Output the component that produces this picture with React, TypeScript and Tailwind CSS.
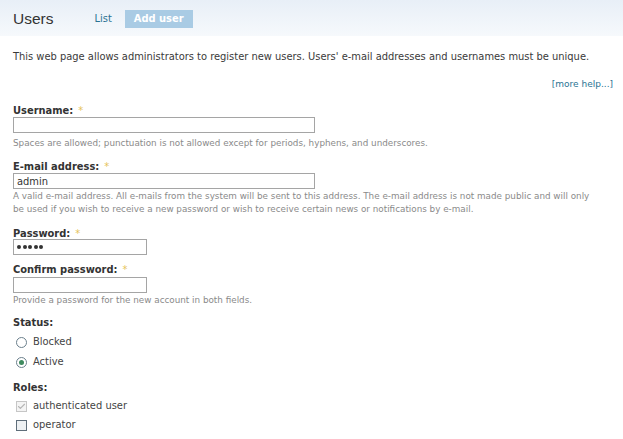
import { Check } from 'lucide-react';

const teal = 'text-[#2a7393]';
const cond = "font-['DejaVu_Sans_Condensed','DejaVu_Sans',Tahoma,sans-serif]";

function Req() {
  return <span className="text-[#e6c35c] ml-[5px] font-normal">*</span>;
}

function Field({
  label,
  width,
  gap,
  children,
  input,
}: {
  label: string;
  width: string;
  gap: string;
  children?: React.ReactNode;
  input?: React.ReactNode;
}) {
  return (
    <div>
      <div className={`text-[11px] font-bold text-[#333] leading-[14px] ${cond}`}>
        {label}
        <Req />
      </div>
      <div className={`${width} ${gap} h-[16px] border border-[#a5a5a5] bg-white text-[11px] leading-[13px] px-[3px] text-[#333] flex items-center`}>
        {input}
      </div>
      {children}
    </div>
  );
}

function Dots() {
  return (
    <span className="flex gap-[1.5px]">
      {[0, 1, 2, 3, 4].map((i) => (
        <span key={i} className="w-[4px] h-[4px] rounded-full bg-[#333]" />
      ))}
    </span>
  );
}

export default function App() {
  return (
    <div className={`w-[623px] h-[439px] overflow-hidden bg-white text-[#333] ${cond}`}>
      {/* Header band */}
      <div className="h-[36px] bg-gradient-to-b from-[#e8eff7] to-[#f6f9fc] flex items-center px-[13px] pt-[2px]">
        <h1 className="font-['Liberation_Sans',Arial,sans-serif] text-[15.5px] text-[#333] leading-none">Users</h1>
        <a className={`ml-[41px] text-[11px] ${teal}`}>List</a>
        <span className="ml-[13px] h-[18px] px-[9px] bg-[#a9cbe4] text-white text-[11px] font-bold flex items-center">Add user</span>
      </div>

      <div className="px-[13px]">
        <p className="mt-[14px] text-[11px] leading-[14px] text-[#3a3a3a]">
          This web page allows administrators to register new users. Users' e-mail addresses and usernames must be unique.
        </p>
        <div className={`mt-[14px] text-right text-[9px] leading-[12px] font-['DejaVu_Sans',sans-serif] ${teal}`}>
          <span className="mr-[-3px]">[more help...]</span>
        </div>

        <div className="mt-[14px]">
          <Field label="Username:" width="w-[302px]" gap="-mt-[1px]">
            <div className="text-[8.8px] text-[#8a8a8a] leading-[12px] mt-[4px] font-['DejaVu_Sans',sans-serif]">
              Spaces are allowed; punctuation is not allowed except for periods, hyphens, and underscores.
            </div>
          </Field>
        </div>

        <div className="mt-[11px]">
          <Field label="E-mail address:" width="w-[302px]" gap="-mt-[1px]" input="admin">
            <div className="text-[8.8px] text-[#8a8a8a] leading-[13px] mt-[1px] font-['DejaVu_Sans',sans-serif] pr-[8px]">
              A valid e-mail address. All e-mails from the system will be sent to this address. The e-mail address is not made public and will only be used if you wish to receive a new password or wish to receive certain news or notifications by e-mail.
            </div>
          </Field>
        </div>

        <div className="mt-[11px]">
          <Field label="Password:" width="w-[134px]" gap="-mt-[2px]" input={<Dots />} />
        </div>
        <div className="mt-[8px]">
          <Field label="Confirm password:" width="w-[134px]" gap="mt-0">
            <div className="text-[8.8px] text-[#8a8a8a] leading-[12px] mt-[1px] font-['DejaVu_Sans',sans-serif]">
              Provide a password for the new account in both fields.
            </div>
          </Field>
        </div>

        <div className="mt-[10px] text-[11px] font-bold leading-[14px]">Status:</div>
        <div className="mt-[5px] flex flex-col gap-[6px] pl-[3px] text-[11px] leading-[14px] text-[#444]">
          <div className="flex items-center gap-[6px]">
            <span className="w-[11px] h-[11px] rounded-full border border-[#6b7f8c] bg-white" />
            Blocked
          </div>
          <div className="flex items-center gap-[6px]">
            <span className="w-[11px] h-[11px] rounded-full border border-[#6b7f8c] bg-white flex items-center justify-center">
              <span className="w-[5px] h-[5px] rounded-full bg-[#3e8a5e]" />
            </span>
            Active
          </div>
        </div>

        <div className="mt-[12px] text-[11px] font-bold leading-[14px]">Roles:</div>
        <div className="mt-[4px] flex flex-col gap-[5px] pl-[3px] text-[11px] leading-[14px] text-[#444]">
          <div className="flex items-center gap-[6px]">
            <span className="w-[11px] h-[11px] border border-[#c6c6c6] bg-[#f4f4f4] flex items-center justify-center">
              <Check className="w-[9px] h-[9px] text-[#b5b5b5]" strokeWidth={3} />
            </span>
            authenticated user
          </div>
          <div className="flex items-center gap-[6px]">
            <span className="w-[11px] h-[11px] border border-[#5f6e7a] bg-[#eef1f3]" />
            operator
          </div>
        </div>
      </div>
    </div>
  );
}
